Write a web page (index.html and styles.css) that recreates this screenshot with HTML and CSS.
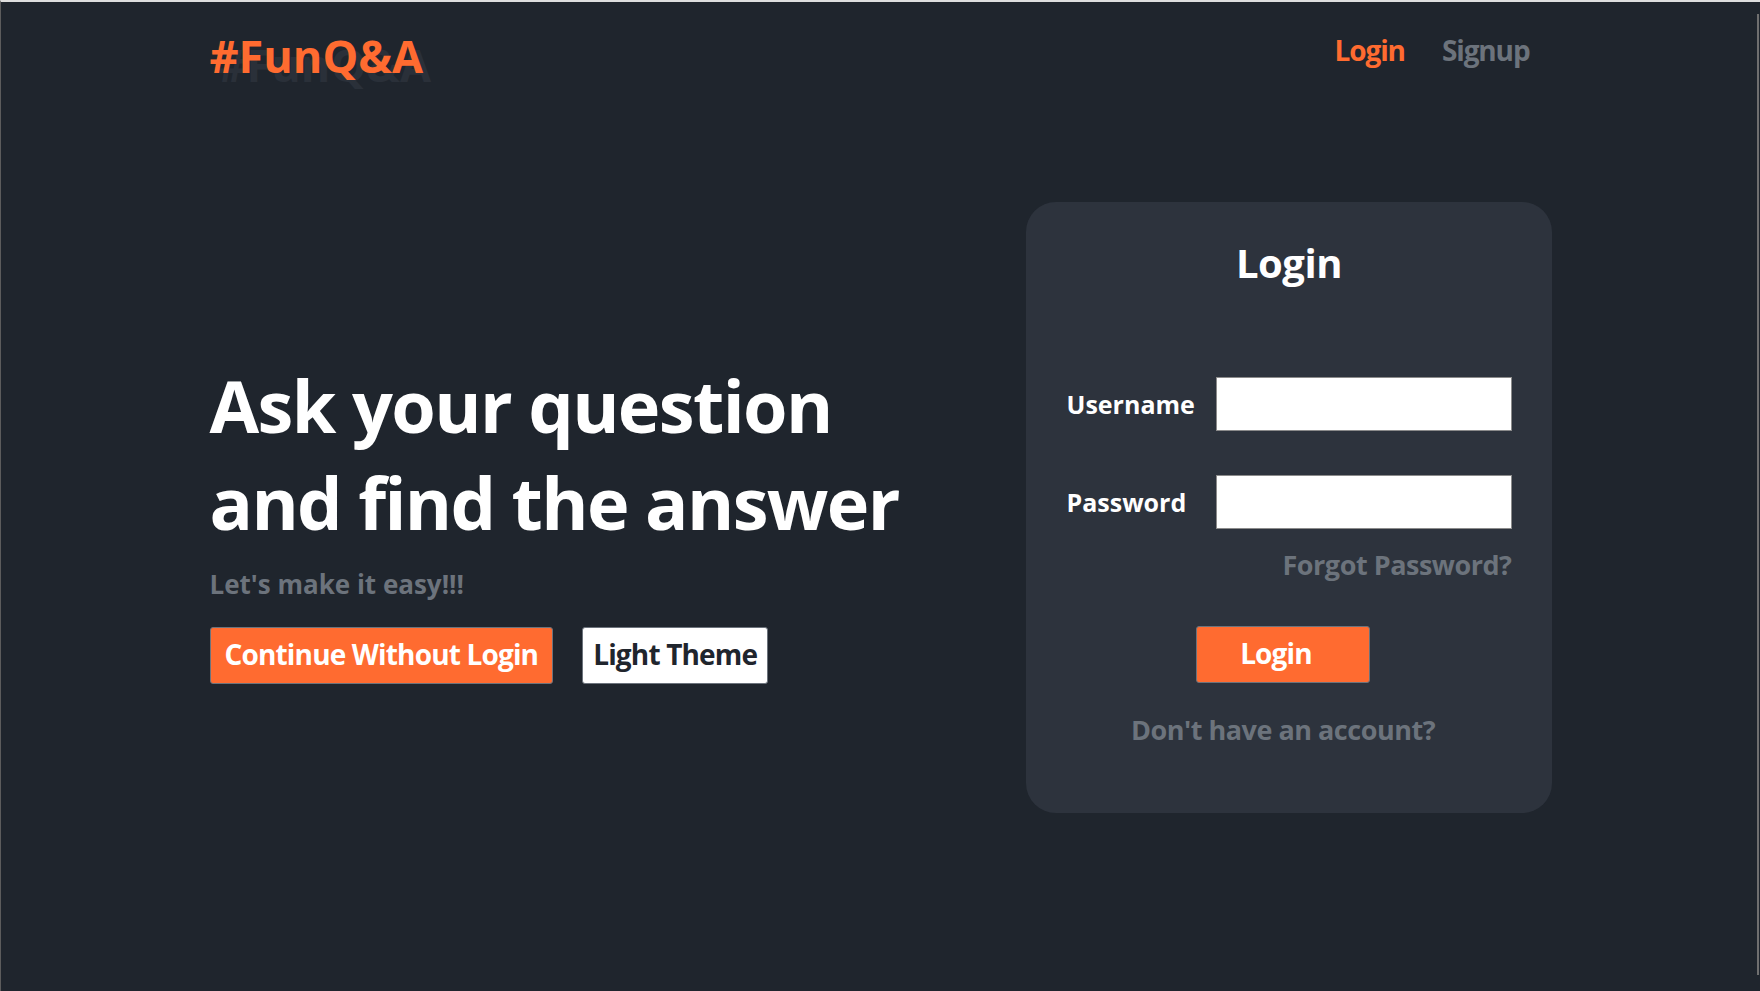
FILE: index.html
```html
<!DOCTYPE html>
<html lang="en">
<head>
<meta charset="utf-8">
<title>#FunQ&amp;A</title>
<link rel="stylesheet" href="styles.css">
</head>
<body>
<div class="frame">
  <div class="container">
    <header class="topbar">
      <a class="logo" href="#">#FunQ&amp;A</a>
      <nav class="nav">
        <a class="nav-link active" href="#">Login</a>
        <a class="nav-link" href="#">Signup</a>
      </nav>
    </header>
    <main class="hero">
      <section class="intro">
        <h1 class="headline">Ask your question<br>and find the answer</h1>
        <p class="tagline">Let's make it easy!!!</p>
        <div class="actions">
          <button class="btn btn-primary" type="button">Continue Without Login</button>
          <button class="btn btn-light" type="button">Light Theme</button>
        </div>
      </section>
      <section class="card">
        <h2 class="card-title">Login</h2>
        <form class="form">
          <div class="field">
            <label class="field-label" for="username">Username</label>
            <input class="field-input" id="username" type="text">
          </div>
          <div class="field">
            <label class="field-label" for="password">Password</label>
            <input class="field-input" id="password" type="password">
          </div>
          <a class="forgot" href="#">Forgot Password?</a>
          <div class="form-footer">
            <button class="btn btn-primary btn-submit" type="submit">Login</button>
            <a class="switch" href="#">Don't have an account?</a>
          </div>
        </form>
      </section>
    </main>
  </div>
  <div class="scrollbar"></div>
</div>
</body>
</html>
```
FILE: styles.css
```css
* { box-sizing: border-box; }

html, body {
  margin: 0;
  padding: 0;
  background: #1f252d;
}

body {
  font-family: "Open Sans", "Noto Sans", sans-serif;
  font-weight: 700;
  color: #ffffff;
  font-variant-ligatures: none;
  letter-spacing: -0.48px;
}

.frame {
  min-height: 100vh;
  border-top: 2px solid #dedede;
  border-left: 1px solid #5c5c5c;
  position: relative;
}

.container {
  width: 1342px;
  margin: 0 auto;
}

.topbar {
  display: flex;
  justify-content: space-between;
  align-items: flex-start;
  padding-top: 26px;
}

.logo {
  font-size: 45px;
  line-height: 55px;
  letter-spacing: 0;
  color: #ff6b30;
  text-decoration: none;
  text-shadow: 8px 9px 0 #2a3039;
}

.nav {
  display: flex;
  gap: 37px;
  margin-top: 5px;
  margin-right: 22px;
}

.nav-link {
  font-size: 28px;
  line-height: 34px;
  letter-spacing: -1.12px;
  color: #6c737c;
  text-decoration: none;
}

.nav-link.active { color: #ff6b30; }

.hero {
  display: flex;
  justify-content: space-between;
  align-items: flex-start;
  margin-top: 119px;
}

.intro {
  margin-top: 155px;
}

.headline {
  margin: 0;
  font-size: 72px;
  line-height: 97px;
  letter-spacing: -1.6px;
  font-weight: 700;
  color: #ffffff;
}

.tagline {
  margin: 17px 0 0;
  font-size: 26px;
  line-height: 32px;
  letter-spacing: 0;
  color: #6c737c;
}

.actions {
  display: flex;
  gap: 29px;
  margin-top: 27px;
}

.btn {
  font-family: inherit;
  font-weight: 700;
  font-size: 28px;
  letter-spacing: -0.84px;
  line-height: 34px;
  height: 57px;
  padding: 9px 14px 12px;
  border: 1px solid #6c737c;
  border-radius: 3px;
  cursor: pointer;
}

.btn-primary {
  background: #ff6b30;
  color: #ffffff;
}

.btn-light {
  background: #ffffff;
  color: #1f252d;
  padding-left: 10px;
  padding-right: 10px;
}

.card {
  width: 526px;
  height: 611px;
  background: #2d333d;
  border-radius: 30px;
  padding: 37px 40px 0 41px;
}

.card-title {
  margin: 0;
  text-align: center;
  font-size: 40px;
  line-height: 48px;
  font-weight: 700;
}

.form {
  display: flex;
  flex-direction: column;
  margin-top: 90px;
}

.field {
  display: flex;
  justify-content: space-between;
  align-items: center;
}

.field + .field { margin-top: 44px; }

.field-label {
  font-size: 25px;
  line-height: 30px;
  letter-spacing: 0;
  color: #ffffff;
}

.field-input {
  width: 296px;
  height: 54px;
  background: #ffffff;
  border: 1px solid #8b8b8b;
  border-radius: 0;
  font-family: inherit;
  font-size: 22px;
  padding: 0 8px;
}

.forgot {
  align-self: flex-end;
  margin-top: 19px;
  font-size: 27px;
  line-height: 33px;
  color: #6c737c;
  text-decoration: none;
}

.form-footer {
  display: flex;
  flex-direction: column;
  align-items: center;
  padding-right: 12px;
  margin-top: 45px;
}

.btn-submit {
  width: 174px;
  padding-left: 4px;
  padding-right: 18px;
}

.switch {
  margin-top: 30px;
  font-size: 27px;
  line-height: 33px;
  color: #6c737c;
  text-decoration: none;
}

.scrollbar {
  position: absolute;
  top: 12px;
  bottom: 16px;
  right: 1px;
  width: 2px;
  background: #6f6f6f;
}
```
